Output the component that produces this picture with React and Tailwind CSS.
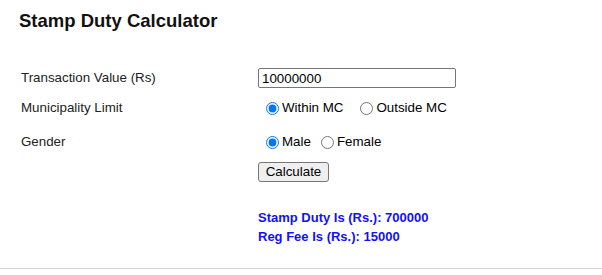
import React, { useState } from "react";

const font = { fontFamily: '"Liberation Sans", Arial, sans-serif' };

const App = () => {
  const [value, setValue] = useState("10000000");
  const [area, setArea] = useState("within");
  const [gender, setGender] = useState("male");

  return (
    <div
      className="w-[602px] h-[269px] bg-white border-b border-[#d3d3d3] text-[#222]"
      style={font}
    >
      <h2 className="pt-[10px] pl-[19px] text-[18.5px] leading-[22px] font-bold text-[#111]">
        Stamp Duty Calculator
      </h2>

      <div className="mt-[36px] pl-[21px] grid grid-cols-[237px_1fr] text-[13.33px]">
        {/* transaction value */}
        <div className="h-[20px] flex items-center">Transaction Value (Rs)</div>
        <div className="h-[20px] flex items-center">
          <input
            type="text"
            value={value}
            onChange={(e) => setValue(e.target.value)}
            className="w-[198px] h-[20px] border border-[#767676] rounded-[2px] px-[3px] text-[13.33px] text-black outline-none"
            style={font}
          />
        </div>

        {/* municipality */}
        <div className="mt-[10px] h-[20px] flex items-center">Municipality Limit</div>
        <div className="mt-[10px] h-[20px] flex items-center pl-[8px] text-black">
          <input
            type="radio"
            name="area"
            checked={area === "within"}
            onChange={() => setArea("within")}
            className="m-0 mr-[3px] w-[13px] h-[13px] accent-[#0075ff]"
          />
          <span>Within MC</span>
          <input
            type="radio"
            name="area"
            checked={area === "outside"}
            onChange={() => setArea("outside")}
            className="m-0 ml-[17px] mr-[3px] w-[13px] h-[13px] accent-[#0075ff]"
          />
          <span>Outside MC</span>
        </div>

        {/* gender */}
        <div className="mt-[14px] h-[20px] flex items-center">Gender</div>
        <div className="mt-[14px] h-[20px] flex items-center pl-[8px] text-black">
          <input
            type="radio"
            name="gender"
            checked={gender === "male"}
            onChange={() => setGender("male")}
            className="m-0 mr-[3px] w-[13px] h-[13px] accent-[#0075ff]"
          />
          <span>Male</span>
          <input
            type="radio"
            name="gender"
            checked={gender === "female"}
            onChange={() => setGender("female")}
            className="m-0 ml-[10px] mr-[3px] w-[13px] h-[13px] accent-[#0075ff]"
          />
          <span>Female</span>
        </div>

        <div />
        <div className="mt-[10px]">
          <button
            className="w-[71px] h-[20px] bg-[#efefef] border border-[#767676] rounded-[3px] text-[13.33px] text-black leading-none"
            style={font}
          >
            Calculate
          </button>
        </div>

        <div />
        <div className="mt-[26px] text-[13px] leading-[19px] font-bold text-[#1010ff]">
          <div>Stamp Duty Is (Rs.): 700000</div>
          <div>Reg Fee Is (Rs.): 15000</div>
        </div>
      </div>
    </div>
  );
};

export default App;
